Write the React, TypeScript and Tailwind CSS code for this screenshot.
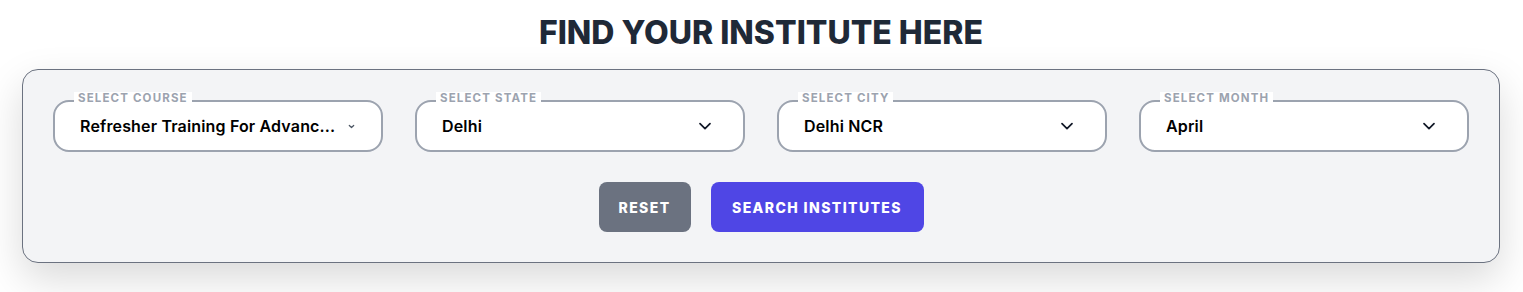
type SelectFieldProps = {
  label: string
  value: string
  small?: boolean
}

function Chevron({ small }: { small?: boolean }) {
  if (small) {
    return (
      <svg className="h-[7px] w-[7px] shrink-0" viewBox="0 0 8 8" fill="none" stroke="#4b5563" strokeWidth={1.4}>
        <path d="M1.5 2.8L4 5.2L6.5 2.8" strokeLinecap="round" strokeLinejoin="round" />
      </svg>
    )
  }
  return (
    <svg className="h-[16px] w-[16px] shrink-0" viewBox="0 0 24 24" fill="none" stroke="#111827" strokeWidth={2.6}>
      <path d="M4.5 8.5L12 16L19.5 8.5" strokeLinecap="round" strokeLinejoin="round" />
    </svg>
  )
}

function SelectField({ label, value, small }: SelectFieldProps) {
  return (
    <div className="relative">
      <span className="absolute -top-[8px] left-[21px] bg-white px-1 text-[11.5px] leading-[13px] font-bold tracking-[0.1em] text-[#9ca3af] uppercase">
        {label}
      </span>
      <div className={`flex h-[52px] items-center justify-between rounded-2xl border-2 border-[#9ca3af] bg-white pl-[25px] ${small ? 'pr-[26px]' : 'pr-[30px]'}`}>
        <span className="truncate text-[16px] font-semibold tracking-[0.01em] text-black">{value}</span>
        <Chevron small={small} />
      </div>
    </div>
  )
}

export default function App() {
  return (
    <div className="min-h-[292px] bg-white pt-[14px] pr-[23px] pb-[30px] pl-[22px]" style={{ fontFamily: 'Inter, "Open Sans", sans-serif' }}>
      <h1 className="mb-[17px] text-center text-[32px] leading-[38px] font-extrabold text-[#1f2937]">
        FIND YOUR INSTITUTE HERE
      </h1>

      <div className="rounded-2xl border border-[#6b7280] bg-[#f3f4f6] px-[30px] py-[30px] shadow-[0_16px_40px_rgba(0,0,0,0.15)]">
        <div className="grid grid-cols-4 gap-8">
          <SelectField label="Select Course" value="Refresher Training For Advanc..." small />
          <SelectField label="Select State" value="Delhi" />
          <SelectField label="Select City" value="Delhi NCR" />
          <SelectField label="Select Month" value="April" />
        </div>

        <div className="mt-[30px] flex justify-center gap-5">
          <button className="h-[50px] w-[92px] rounded-lg bg-[#6b7280] text-[14px] font-extrabold tracking-[0.1em] text-white uppercase">
            Reset
          </button>
          <button className="h-[50px] w-[213px] rounded-lg bg-[#4f46e5] text-[14px] font-extrabold tracking-[0.1em] text-white uppercase">
            Search Institutes
          </button>
        </div>
      </div>
    </div>
  )
}
